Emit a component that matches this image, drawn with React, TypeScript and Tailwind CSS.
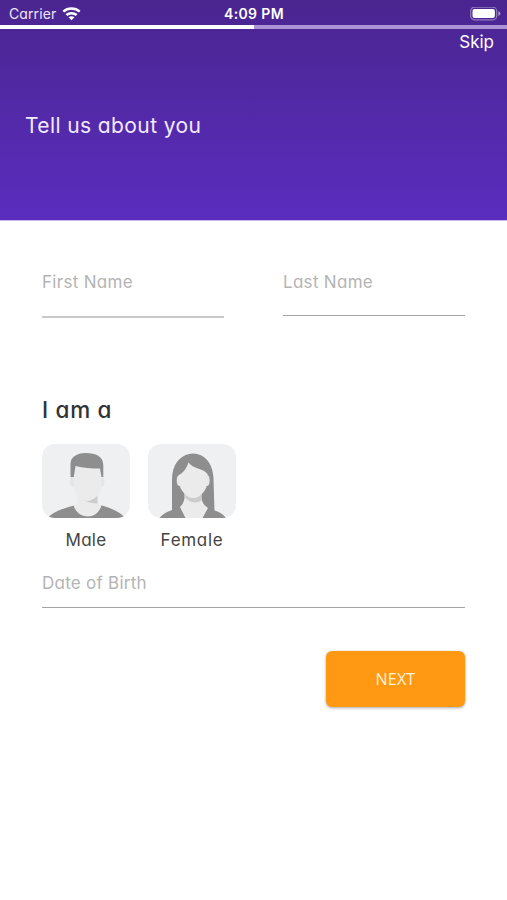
import React from "react"

const MaleAvatar: React.FC = () => (
  <svg viewBox="0 0 88 74" className="h-[74px] w-[88px] rounded-[13px] bg-[#eef0f2]">
    <path d="M5.500 74C12 67 23 64 32 61.500L60 61.500C69 64 78 68 83.500 74Z" fill="#8e8e8e" />
    <path d="M35.500 48V58Q35 60.500 31.500 61.500C34 69 40 72.500 46 72.500S57 69 59.500 61.500Q56 60 55.500 57V48Z" fill="#ebebeb" />
    <path d="M41 55.500Q48 58 55.500 51V59.500Q47 59.500 41 55.500Z" fill="#cccccc" />
    <ellipse cx="31" cy="37.500" rx="3" ry="5.500" fill="#e6e6e6" />
    <ellipse cx="59.500" cy="37.500" rx="3" ry="5.500" fill="#e6e6e6" />
    <path d="M28.500 33V20C28.500 13 35 9.200 43 9C53 8.700 61.300 12 61.300 21V33H28.500Z" fill="#8e8e8e" />
    <path d="M33.500 22C41 24 50 24.500 58 24.500L59.500 33V42C59.500 50 51 57 45.500 57S31.800 50 31.800 42V33Z" fill="#ebebeb" />
  </svg>
)

const FemaleAvatar: React.FC = () => (
  <svg viewBox="0 0 88 74" className="h-[74px] w-[88px] rounded-[13px] bg-[#eef0f2]">
    <path d="M24 68V36C24 20 32 12 41 10Q45 9 49 10C60 12.500 65 23 65.500 34L66.500 68Z" fill="#8e8e8e" />
    <path d="M11.500 74C16 68 24 66 31 64H58C66 66 74 68 78 74Z" fill="#8e8e8e" />
    <path d="M36.500 47V54Q36 59 32 63L37.500 74H54.500L60 64Q54 60 53.500 54V47Z" fill="#ebebeb" />
    <path d="M36.500 50Q45 58 53.500 50V56.500Q45 62 36.500 53Z" fill="#cccccc" />
    <ellipse cx="31.200" cy="36.500" rx="2.500" ry="5.500" fill="#e8e8e8" />
    <ellipse cx="59.200" cy="36.500" rx="2.500" ry="5.500" fill="#e8e8e8" />
    <path d="M31 31Q38 27 40.500 18.500C45 25 55 24 59.500 30V37C59.500 47 51 54 45.500 54S31 47 31 37Z" fill="#ebebeb" />
  </svg>
)

const WifiIcon: React.FC = () => (
  <svg viewBox="0 0 19 14" className="h-[14px] w-[19px]" fill="none" stroke="#fff" strokeWidth="2.500">
    <path d="M1.300 4.700C5.800 0.500 13.200 0.500 17.700 4.700" />
    <path d="M4.400 8C7.200 5.500 11.800 5.500 14.600 8" />
    <path d="M6.500 10.300Q9.500 8 12.500 10.300L9.500 13.300Z" fill="#fff" stroke="none" />
  </svg>
)

const BatteryIcon: React.FC = () => (
  <svg viewBox="0 0 31 14" className="h-[14px] w-[31px]">
    <rect x="0.700" y="0.200" width="26" height="12.600" rx="3.800" fill="none" stroke="#fff" strokeOpacity="0.4" strokeWidth="1.200" />
    <rect x="2.500" y="2" width="22.400" height="9" rx="2" fill="#fff" />
    <path d="M28.300 4Q30.500 5 30.500 6.500T28.300 9Z" fill="#fff" fillOpacity="0.5" />
  </svg>
)

const genders: { label: string; avatar: React.ReactNode; className: string }[] = [
  { label: "Male", avatar: <MaleAvatar />, className: "tracking-[0.3px]" },
  { label: "Female", avatar: <FemaleAvatar />, className: "tracking-[0.7px]" },
]

const App: React.FC = () => {
  return (
    <div className="min-h-[900px] w-[507px] bg-white font-['Inter',sans-serif] [font-feature-settings:'cv11']">
      <header className="h-[221px] border-b border-[#c9b8ee] bg-gradient-to-b from-[#4a2590] to-[#5b2dbf] text-white">
        {/* Status bar */}
        <div className="grid h-[25px] grid-cols-3 items-center pt-[2px] pr-[6px] pl-[9px]">
          <div className="flex items-center gap-[6px]">
            <span className="text-[14px] leading-[22px] tracking-[0.1px] text-[#eee6fa]">Carrier</span>
            <WifiIcon />
          </div>
          <span className="mr-[2px] text-center text-[14px] leading-[22px] font-semibold tracking-[0.35px]">4:09 PM</span>
          <div className="flex justify-end">
            <BatteryIcon />
          </div>
        </div>

        {/* Progress */}
        <div className="h-[4px] bg-[#ab93d6]">
          <div className="h-full w-1/2 bg-white" />
        </div>

        <div className="flex justify-end pr-[13px]">
          <button className="text-[17px] leading-[27px]">Skip</button>
        </div>
        <h1 className="mt-[54px] pl-[25px] text-[21px] leading-[32px] tracking-[0.4px] text-[#f3ebff]">Tell us about you</h1>
      </header>

      <main className="px-[42px] pt-[48px]">
        <div className="flex justify-between">
          <div className="h-[49px] w-[182px] border-b-2 border-[#c8c8c8] text-[17px] leading-[27px] tracking-[0.3px] text-[#b4b4b4]">
            First Name
          </div>
          <div className="h-[47px] w-[182px] border-b border-[#a4a4a4] text-[17px] leading-[26px] tracking-[0.3px] text-[#b4b4b4]">
            Last Name
          </div>
        </div>

        <h2 className="mt-[76px] text-[22.5px] leading-[32px] font-medium tracking-[0.7px] text-[#333]">I am a</h2>
        <div className="mt-[18px] flex gap-[18px]">
          {genders.map((gender) => (
            <button key={gender.label} className="flex flex-col items-center">
              {gender.avatar}
              <span className={`mt-[9px] text-[17px] leading-[26px] text-[#444] ${gender.className}`}>{gender.label}</span>
            </button>
          ))}
        </div>

        <div className="mt-[17px] h-[38px] border-b border-[#a4a4a4] text-[17px] leading-[27px] tracking-[0.25px] text-[#b4b4b4]">
          Date of Birth
        </div>

        <div className="mt-[43px] flex justify-end">
          <button className="h-[56px] w-[139px] rounded-[6px] bg-[#ff9914] font-['Open_Sans',sans-serif] text-[16px] font-medium tracking-[0.2px] text-[#fff3dc] shadow-[0_1px_3px_rgba(0,0,0,0.35)]">
            NEXT
          </button>
        </div>
      </main>
    </div>
  )
}

export default App
